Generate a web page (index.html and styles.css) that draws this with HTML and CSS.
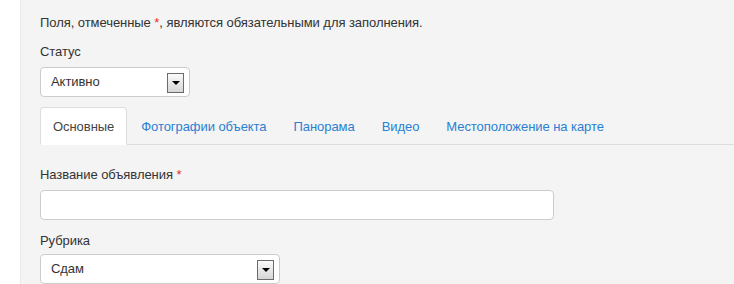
FILE: index.html
```html
<!DOCTYPE html>
<html lang="ru">
<head>
    <meta charset="UTF-8">
    <title>Объявление</title>
    <link rel="stylesheet" href="styles.css">
</head>
<body>
    <div class="page">
        <div class="panel">
            <p class="note">Поля, отмеченные <span class="req">*</span>, являются обязательными для заполнения.</p>

            <div class="field field-status">
                <label class="label">Статус</label>
                <div class="select select-small">
                    <span class="select-value">Активно</span>
                    <span class="select-btn"></span>
                </div>
            </div>

            <ul class="tabs">
                <li class="tab active"><a href="#">Основные</a></li>
                <li class="tab"><a href="#">Фотографии объекта</a></li>
                <li class="tab"><a href="#">Панорама</a></li>
                <li class="tab"><a href="#">Видео</a></li>
                <li class="tab"><a href="#">Местоположение на карте</a></li>
            </ul>

            <div class="tab-content">
                <div class="field">
                    <label class="label">Название объявления <span class="req">*</span></label>
                    <input type="text" class="input">
                </div>
                <div class="field">
                    <label class="label">Рубрика</label>
                    <div class="select select-wide">
                        <span class="select-value">Сдам</span>
                        <span class="select-btn"></span>
                    </div>
                </div>
            </div>
        </div>
    </div>
</body>
</html>
```

FILE: styles.css
```css
* {
    margin: 0;
    padding: 0;
    box-sizing: border-box;
}
body {
    font-family: "Liberation Sans", Arial, sans-serif;
    font-size: 13px;
    line-height: 18px;
    letter-spacing: -0.06px;
    color: #333;
    background: #fff;
    overflow: hidden;
    height: 284px;
}
.page {
    padding-left: 20px;
}
.panel {
    background: #f4f4f4;
    border-left: 1px solid #e8e8e8;
    padding: 14px 0 0 19px;
    height: 284px;
}
.note {
    margin-bottom: 11px;
}
.req {
    color: #e5312f;
}
.field {
    margin-bottom: 12px;
}
.field-status {
    margin-bottom: 10px;
}
.label {
    display: block;
    margin-bottom: 6px;
}
.select {
    display: flex;
    align-items: center;
    height: 30px;
    background: #fff;
    border: 1px solid #ccc;
    border-radius: 4px;
    padding: 0 5px 0 10px;
}
.select-small {
    width: 150px;
}
.select-wide {
    width: 240px;
}
.select-value {
    flex: 1;
}
.select-btn {
    width: 17px;
    height: 20px;
    border: 1px solid #6b6b6b;
    background: linear-gradient(#fafafa, #d6d6d6);
    display: flex;
    align-items: center;
    justify-content: center;
    margin-top: 2px;
}
.select-btn::after {
    content: "";
    border-left: 4px solid transparent;
    border-right: 4px solid transparent;
    border-top: 4px solid #000;
}
.tabs {
    list-style: none;
    display: flex;
    border-bottom: 1px solid #ddd;
}
.tab {
    margin-right: 1px;
    margin-bottom: -1px;
}
.tab a {
    display: block;
    padding: 10px 12px 8px;
    border: 1px solid transparent;
    border-radius: 4px 4px 0 0;
    color: #2a80d2;
    text-decoration: none;
}
.tab.active a {
    color: #444;
    background: #fff;
    border-color: #ddd #ddd transparent;
}
.tab-content {
    padding-top: 21px;
}
.tab-content .field + .field .label {
    margin-bottom: 4px;
}
.input {
    display: block;
    width: 514px;
    height: 30px;
    border: 1px solid #ccc;
    border-radius: 4px;
    background: #fff;
    font: inherit;
    padding: 0 10px;
}
```
